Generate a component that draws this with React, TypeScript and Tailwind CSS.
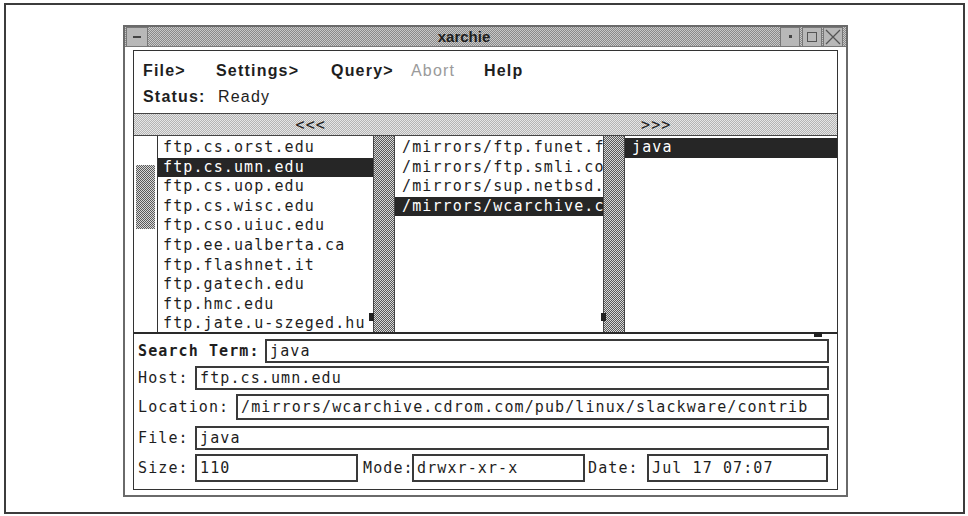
const mono = "font-['DejaVu_Sans_Mono',monospace] text-[15px] tracking-[1.1px] text-[#1e1e1e]";
const sans = "font-['Liberation_Sans',Arial,sans-serif] text-[#1e1e1e]";
const scrollStipple =
  'bg-[image:repeating-conic-gradient(#5a5a5a_0%_25%,#d8d8d8_0%_50%)] bg-[length:2px_2px]';
const titleStipple =
  'bg-[image:repeating-conic-gradient(#8a8a8a_0%_25%,#c8c8c8_0%_50%)] bg-[length:2px_2px]';
const barStipple =
  'bg-[image:repeating-conic-gradient(#b4b4b4_0%_25%,#e6e6e6_0%_50%)] bg-[length:2px_2px]';

const hosts = [
  'ftp.cs.orst.edu',
  'ftp.cs.umn.edu',
  'ftp.cs.uop.edu',
  'ftp.cs.wisc.edu',
  'ftp.cso.uiuc.edu',
  'ftp.ee.ualberta.ca',
  'ftp.flashnet.it',
  'ftp.gatech.edu',
  'ftp.hmc.edu',
  'ftp.jate.u-szeged.hu',
];

const locations = [
  '/mirrors/ftp.funet.fi',
  '/mirrors/ftp.smli.com',
  '/mirrors/sup.netbsd.org',
  '/mirrors/wcarchive.cdrom.com',
];

const ListColumn = ({
  items,
  selected,
  width,
  pad,
}: {
  items: string[];
  selected: number;
  width: string;
  pad: string;
}) => (
  <div className={`${width} h-full overflow-hidden bg-white pt-[2px]`}>
    {items.map((item, i) => (
      <div
        key={item}
        className={`h-[19.6px] leading-[19.6px] whitespace-nowrap ${pad} ${mono} ${
          i === selected ? 'bg-[#262626] !text-white' : ''
        }`}
      >
        {item}
      </div>
    ))}
  </div>
);

const Field = ({ value, className }: { value: string; className: string }) => (
  <div
    className={`flex items-center border-2 border-[#3a3a3a] bg-white pl-[3px] whitespace-nowrap overflow-hidden ${mono} ${className}`}
  >
    {value}
  </div>
);

export default function App() {
  return (
    <div className="w-[968px] h-[516px] bg-white pt-[3px] pl-[4px] overflow-hidden">
      <div className="w-[961px] h-[511px] border-2 border-[#3c3c3c] pl-[117px] pt-[20px]">
        {/* window */}
        <div className="w-[725px] h-[472px] border-2 border-[#6a6a6a] bg-white flex flex-col">
          {/* title bar */}
          <div className={`h-[20px] flex items-center border-b border-[#777] ${titleStipple}`}>
            <div className="w-[22px] h-[20px] ml-[1px] border border-[#777] bg-[#b8b8b8] flex items-center justify-center">
              <div className="w-[8px] h-[2px] bg-[#444]" />
            </div>
            <div className={`flex-1 text-center text-[15px] font-bold leading-none ${sans}`}>xarchie</div>
            <div className="w-[20px] h-[20px] border border-[#777] bg-[#b8b8b8] flex items-center justify-center">
              <div className="w-[3px] h-[3px] bg-[#444]" />
            </div>
            <div className="w-[20px] h-[20px] ml-[2px] border border-[#777] bg-[#b8b8b8] flex items-center justify-center">
              <div className="w-[10px] h-[10px] border border-[#555]" />
            </div>
            <div className="w-[20px] h-[20px] ml-[1px] mr-[3px] border border-[#777] bg-[#b8b8b8] flex items-center justify-center">
              <svg width="18" height="18" viewBox="0 0 18 18">
                <path d="M2 2 L16 16 M16 2 L2 16" stroke="#555" strokeWidth="1.3" />
              </svg>
            </div>
          </div>

          {/* body */}
          <div className="px-[8px] pt-[3px] pb-[5px] flex-1 flex">
            <div className="flex-1 border border-[#333] flex flex-col bg-white">
              {/* menu + status */}
              <div className={`h-[62px] pl-[9px] pt-[10px] ${sans} text-[16px] tracking-[1.2px]`}>
                <div className="flex h-[20px] items-center font-bold">
                  <span className="w-[73px]">File&gt;</span>
                  <span className="w-[115px]">Settings&gt;</span>
                  <span className="w-[80px]">Query&gt;</span>
                  <span className="w-[73px] font-normal text-[#9a9a9a]">Abort</span>
                  <span>Help</span>
                </div>
                <div className="flex h-[20px] items-center mt-[6px]">
                  <span className="w-[75px] font-bold">Status:</span>
                  <span>Ready</span>
                </div>
              </div>

              {/* arrow bar */}
              <div className={`h-[23px] border-y border-[#444] grid grid-cols-2 items-center ${barStipple}`}>
                <div className={`text-center pl-[2px] ${mono}`}>&lt;&lt;&lt;</div>
                <div className={`text-center pr-[10px] ${mono}`}>&gt;&gt;&gt;</div>
              </div>

              {/* lists */}
              <div className="relative h-[198px] flex border-b-2 border-[#2a2a2a]">
                <div className="w-[23px] h-full bg-white pt-[29px] pl-[2px]">
                  <div className={`w-[19px] h-[64px] ${scrollStipple}`} />
                </div>
                <div className="border-l border-[#333] flex">
                  <ListColumn items={hosts} selected={1} width="w-[215px]" pad="pl-[5px]" />
                </div>
                <div className={`w-[22px] h-full border-x border-[#444] ${scrollStipple}`} />
                <ListColumn items={locations} selected={3} width="w-[208px]" pad="pl-[7px]" />
                <div className={`w-[22px] h-full border-x border-[#444] ${scrollStipple}`} />
                <div className="flex-1">
                  <ListColumn items={['java']} selected={0} width="w-full" pad="pl-[7px]" />
                </div>
                <div className="absolute left-[235px] top-[177px] w-[5px] h-[8px] bg-[#222]" />
                <div className="absolute left-[467px] top-[177px] w-[5px] h-[8px] bg-[#222]" />
                <div className="absolute left-[680px] top-[196px] w-[8px] h-[5px] bg-[#222]" />
              </div>

              {/* form */}
              <div className={`pl-[4px] pr-[8px] pt-[5px] ${mono}`}>
                <div className="flex items-center">
                  <span className="w-[127px] font-bold">Search Term:</span>
                  <Field value="java" className="flex-1 h-[24px]" />
                </div>
                <div className="flex items-center mt-[3px]">
                  <span className="w-[57px]">Host:</span>
                  <Field value="ftp.cs.umn.edu" className="flex-1 h-[24px]" />
                </div>
                <div className="flex items-center mt-[4px]">
                  <span className="w-[98px]">Location:</span>
                  <Field
                    value="/mirrors/wcarchive.cdrom.com/pub/linux/slackware/contrib"
                    className="flex-1 h-[26px]"
                  />
                </div>
                <div className="flex items-center mt-[6px]">
                  <span className="w-[57px]">File:</span>
                  <Field value="java" className="flex-1 h-[24px]" />
                </div>
                <div className="flex items-center mt-[4px]">
                  <span className="w-[57px]">Size:</span>
                  <Field value="110" className="w-[163px] h-[28px]" />
                  <span className="w-[54px] pl-[5px]">Mode:</span>
                  <Field value="drwxr-xr-x" className="w-[173px] h-[28px]" />
                  <span className="w-[62px] pl-[3px]">Date:</span>
                  <Field value="Jul 17 07:07" className="w-[181px] h-[28px]" />
                </div>
              </div>
            </div>
          </div>
        </div>
      </div>
    </div>
  );
}
